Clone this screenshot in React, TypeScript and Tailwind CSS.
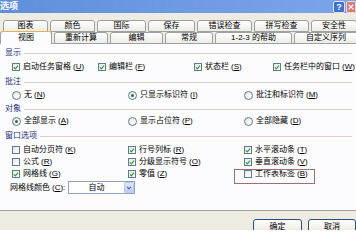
import React from 'react';

const FONT = "font-['Liberation_Sans','Noto_Sans_CJK_SC',sans-serif]";

function Acc({ text, k }: { text: string; k: string }) {
  return (
    <span className="whitespace-nowrap leading-none">
      {text}
      <span className="ml-[2px]">
        (<span className="underline">{k}</span>)
      </span>
    </span>
  );
}

function Check({ checked }: { checked: boolean }) {
  return (
    <span className="w-[8px] h-[8px] border border-[#5d7a98] bg-gradient-to-br from-[#e6e6df] to-white flex items-center justify-center shrink-0">
      {checked && (
        <svg viewBox="0 0 8 8" className="w-[7px] h-[7px]">
          <path d="M1.2 3.8l1.9 2 3.7-4.3" stroke="#2c9a2c" strokeWidth="1.5" fill="none" />
        </svg>
      )}
    </span>
  );
}

function Radio({ on }: { on: boolean }) {
  return (
    <span className="w-[9px] h-[9px] rounded-full border border-[#5d7a98] bg-gradient-to-br from-[#e6e6df] to-white flex items-center justify-center shrink-0">
      {on && <span className="w-[3px] h-[3px] rounded-full bg-[#356b35]" />}
    </span>
  );
}

function CheckItem({ text, k, checked }: { text: string; k: string; checked: boolean }) {
  return (
    <div className="flex items-center gap-[3px] h-[12px]">
      <Check checked={checked} />
      <Acc text={text} k={k} />
    </div>
  );
}

function RadioItem({ text, k, on }: { text: string; k: string; on: boolean }) {
  return (
    <div className="flex items-center gap-[3px] h-[12px]">
      <Radio on={on} />
      <Acc text={text} k={k} />
    </div>
  );
}

function Header({ label }: { label: string }) {
  return (
    <div className="flex items-center h-[10px] pl-[5px] pr-[4px]">
      <span className="text-[#22317a] leading-none whitespace-nowrap">{label}</span>
      <span className="flex-1 h-px bg-[#d6d3c6] ml-[3px]" />
    </div>
  );
}

function Tab({ label, w, selected }: { label: string; w: string; selected?: boolean }) {
  return (
    <div
      className={`${w} shrink-0 flex items-center justify-center border border-[#9aa2a4] rounded-t-[3px] leading-none ${
        selected
          ? 'h-[13px] -mt-[1px] bg-[#fcfcfe] border-b-0 border-t-[#e6b24a]'
          : 'h-[12px] bg-gradient-to-b from-white to-[#ecebe5]'
      }`}
    >
      {label}
    </div>
  );
}

export default function App() {
  return (
    <div className={`w-[356px] h-[230px] overflow-hidden bg-[#eeebe1] flex flex-col text-[8px] text-black ${FONT}`}>
      {/* Title bar */}
      <div className="h-[13px] shrink-0 flex items-center bg-gradient-to-r from-[#5f8fdc] to-[#7aa5ea]">
        <span className="ml-0 text-white text-[9px] font-bold leading-none">选项</span>
        <div className="flex-1" />
        <div className="w-[12px] h-[12px] mt-[1px] bg-[#3f71d4] border border-[#dfe8fb] rounded-[2px] flex items-center justify-center text-white text-[9px] font-bold leading-none">
          ?
        </div>
        <div className="w-[10px] h-[12px] mt-[1px] ml-[1px] bg-[#d87878] border border-[#f3d9d9] rounded-l-[2px] flex items-center justify-center overflow-hidden">
          <svg viewBox="0 0 10 10" className="w-[8px] h-[8px]">
            <path d="M2 2l6 6M8 2l-6 6" stroke="white" strokeWidth="1.6" />
          </svg>
        </div>
      </div>

      <div className="h-[7px] shrink-0" />

      {/* Tabs row 1 */}
      <div className="flex gap-[2px] pl-[3px] shrink-0">
        <Tab label="图表" w="w-[45px]" />
        <Tab label="颜色" w="w-[45px]" />
        <Tab label="国际" w="w-[49px]" />
        <Tab label="保存" w="w-[47px]" />
        <Tab label="错误检查" w="w-[55px]" />
        <Tab label="拼写检查" w="w-[55px]" />
        <Tab label="安全性" w="w-[46px]" />
      </div>
      {/* Tabs row 2 */}
      <div className="flex gap-[2px] shrink-0 relative z-10 -mb-px">
        <Tab label="视图" w="w-[52px]" selected />
        <Tab label="重新计算" w="w-[54px]" />
        <Tab label="编辑" w="w-[53px]" />
        <Tab label="常规" w="w-[48px]" />
        <Tab label="1-2-3 的帮助" w="w-[77px]" />
        <Tab label="自定义序列" w="w-[64px]" />
      </div>

      {/* Panel */}
      <div className="h-[168px] shrink-0 bg-[#fcfcfe] border-t border-b border-[#9aa2a4] pt-[4px] flex flex-col">
        <Header label="显示" />
        <div className="mt-[3px] grid grid-cols-[86px_96px_79px_1fr] pl-[12px]">
          <CheckItem text="启动任务窗格" k="U" checked />
          <CheckItem text="编辑栏" k="F" checked />
          <CheckItem text="状态栏" k="S" checked />
          <CheckItem text="任务栏中的窗口" k="W" checked />
        </div>

        <div className="mt-[4px]">
          <Header label="批注" />
        </div>
        <div className="mt-[2px] grid grid-cols-[116px_116px_1fr] pl-[12px]">
          <RadioItem text="无" k="N" on={false} />
          <RadioItem text="只显示标识符" k="I" on />
          <RadioItem text="批注和标识符" k="M" on={false} />
        </div>

        <div className="mt-[3px]">
          <Header label="对象" />
        </div>
        <div className="mt-[1px] grid grid-cols-[116px_116px_1fr] pl-[12px]">
          <RadioItem text="全部显示" k="A" on />
          <RadioItem text="显示占位符" k="P" on={false} />
          <RadioItem text="全部隐藏" k="D" on={false} />
        </div>

        <div className="mt-[4px]">
          <Header label="窗口选项" />
        </div>
        <div className="mt-[3px] grid grid-cols-[116px_116px_1fr] pl-[12px]">
          <CheckItem text="自动分页符" k="K" checked={false} />
          <CheckItem text="行号列标" k="R" checked />
          <CheckItem text="水平滚动条" k="T" checked />
          <CheckItem text="公式" k="R" checked={false} />
          <CheckItem text="分级显示符号" k="O" checked />
          <CheckItem text="垂直滚动条" k="V" checked />
          <CheckItem text="网格线" k="G" checked />
          <CheckItem text="零值" k="Z" checked />
          <div className="relative">
            <CheckItem text="工作表标签" k="B" checked={false} />
            <div className="absolute -left-[10px] top-[1px] w-[81px] h-[15px] border border-[#9c6f70]" />
          </div>
        </div>

        <div className="mt-[1px] flex items-center pl-[10px] h-[13px]">
          <span className="w-[58px] whitespace-nowrap leading-none">
            网格线颜色<span className="ml-[2px]">(<span className="underline">C</span>):</span>
          </span>
          <div className="w-[67px] h-[13px] bg-white border border-[#8ea4c1] flex items-center">
            <span className="flex-1 text-center leading-none">自动</span>
            <span className="w-[10px] h-[11px] bg-gradient-to-b from-[#dde7fc] to-[#b7cbf4] border border-[#b9c9ef] rounded-[1px] flex items-center justify-center">
              <svg viewBox="0 0 8 8" className="w-[6px] h-[6px]">
                <path d="M1.5 2.5l2.5 2.5 2.5-2.5" stroke="#4d6185" strokeWidth="1.4" fill="none" />
              </svg>
            </span>
          </div>
        </div>
      </div>

      {/* Bottom buttons */}
      <div className="flex justify-end gap-[6px] pt-[8px] pr-0">
        <div className="w-[49px] h-[15px] border border-[#2a4f7e] rounded-[3px] bg-gradient-to-b from-white to-[#e8e6dc] flex items-center justify-center leading-none">
          确定
        </div>
        <div className="w-[48px] h-[15px] border border-[#2a4f7e] rounded-[3px] bg-gradient-to-b from-white to-[#e8e6dc] flex items-center justify-center leading-none">
          取消
        </div>
      </div>
    </div>
  );
}
